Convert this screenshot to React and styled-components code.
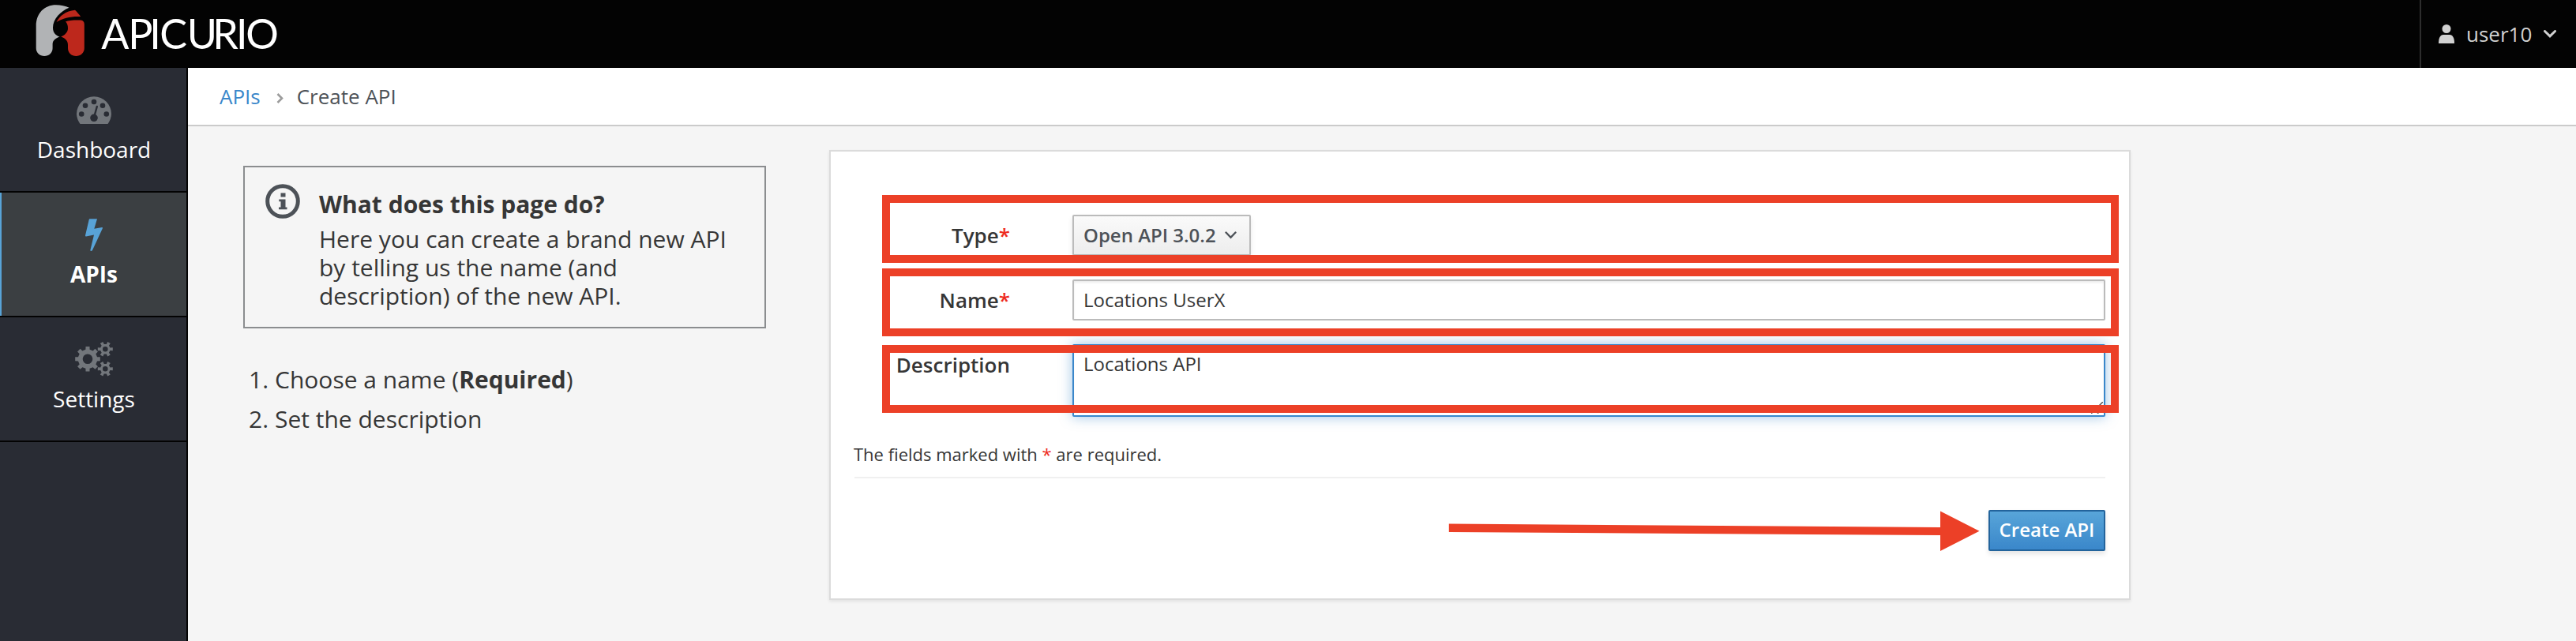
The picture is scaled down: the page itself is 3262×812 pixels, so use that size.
import React from 'react';
import styled, { createGlobalStyle, css } from 'styled-components';

const GlobalStyle = createGlobalStyle`
  *, *::before, *::after { box-sizing: border-box; }
  body {
    margin: 0;
    background: #f5f5f5;
    color: #363636;
    font-family: 'Open Sans', 'Noto Sans', sans-serif;
    overflow: hidden;
  }
`;

const Page = styled.div`
  display: flex;
  flex-direction: column;
  width: 3262px;
  height: 812px;
  overflow: hidden;
`;

const Masthead = styled.header`
  display: flex;
  justify-content: space-between;
  flex: 0 0 86px;
  background: #030303;
`;

const Logo = styled.svg`
  display: block;
  width: 360px;
  height: 86px;
`;

const LogoText = styled.text`
  font-family: Lato, sans-serif;
  font-size: 52px;
  font-weight: 400;
  fill: #fff;
`;

const UserMenu = styled.div`
  display: flex;
  align-items: center;
  width: 198px;
  padding-left: 22px;
  border-left: 2px solid #2d2d2d;
  color: #d1d1d1;
  font-size: 26px;
  line-height: 86px;
  svg { display: block; }
`;

const UserName = styled.span`
  width: 82px;
  margin: 0 16px 0 15px;
  white-space: nowrap;
`;

const Body = styled.div`
  display: flex;
  flex: 1;
  min-height: 0;
`;

const Sidebar = styled.nav`
  flex: 0 0 238px;
  background: #292c34;
  border-right: 2px solid #030303;
`;

const NavItem = styled.a`
  display: flex;
  flex-direction: column;
  align-items: center;
  gap: 8px;
  height: 158px;
  padding: 31px 0 0 2px;
  border-bottom: 2px solid #030303;
  color: #fff;
  font-size: 28px;
  line-height: 40px;
  ${({ $active }) =>
    $active &&
    css`
      background: #3b3f42;
      box-shadow: inset 2px 0 0 #58a3d7;
      font-weight: 700;
    `}
`;

const NavIcon = styled.svg`
  display: block;
  width: 48px;
  height: 44px;
  fill: ${({ $active }) => ($active ? '#58a3d7' : '#72767b')};
`;

const Main = styled.main`
  flex: 1;
  min-width: 0;
`;

const Breadcrumb = styled.div`
  display: flex;
  align-items: center;
  height: 74px;
  padding-left: 40px;
  background: #fff;
  border-bottom: 2px solid #cbcbcb;
  color: #4d5258;
  font-size: 26px;
  line-height: 72px;
  svg { display: block; margin: 4px 17px 0 20px; }
`;

const CrumbLink = styled.a`
  color: #3a87ca;
`;

const Content = styled.div`
  display: flex;
  align-items: flex-start;
  padding: 30px 0 0 70px;
`;

const Help = styled.section`
  width: 662px;
  margin: 20px 80px 0 0;
  font-size: 30px;
`;

const InfoBox = styled.div`
  display: flex;
  height: 206px;
  padding: 29px 26px 0;
  border: 2px solid #8b8d8f;
  line-height: 36px;
`;

const InfoIcon = styled.svg`
  flex: 0 0 44px;
  height: 44px;
  margin: -8px 24px 0 0;
`;

const InfoTitle = styled.div`
  margin-bottom: 8px;
  font-weight: 700;
`;

const InfoText = styled.div`
  width: 530px;
`;

const Steps = styled.ol`
  margin: 40px 0 0;
  padding: 0 0 0 7px;
  list-style: none;
  line-height: 50px;
`;

const Step = styled.li`
  display: flex;
`;

const StepNumber = styled.span`
  width: 33px;
`;

const Card = styled.div`
  position: relative;
  width: 1648px;
  height: 570px;
  padding: 80px 30px 0;
  background: #fff;
  border: 2px solid #dbdbdb;
  box-shadow: 0 2px 4px rgba(3, 3, 3, 0.08);
`;

const Row = styled.div`
  display: flex;
  align-items: flex-start;
  margin-bottom: 30px;
`;

const Label = styled.label`
  flex: 0 0 197px;
  margin-right: 79px;
  text-align: right;
  font-size: 26px;
  font-weight: 600;
  line-height: 52px;
`;

const Star = styled.span`
  color: #ee2b1d;
`;

const Dropdown = styled.div`
  display: flex;
  align-items: center;
  gap: 11px;
  width: 226px;
  height: 52px;
  padding: 0 0 1px 12px;
  border: 2px solid #bbb;
  border-radius: 2px;
  background: linear-gradient(#fafafa, #ededed);
  box-shadow: 0 4px 6px rgba(3, 3, 3, 0.1);
  color: #4d5258;
  font-size: 24px;
  font-weight: 600;
  white-space: nowrap;
`;

const Field = styled.div`
  position: relative;
  width: 1308px;
  height: ${({ $tall }) => ($tall ? '92px' : '52px')};
  padding: ${({ $tall }) => ($tall ? '0 12px' : '1px 12px 0')};
  border: 2px solid ${({ $focused }) => ($focused ? '#3a87ca' : '#bbb')};
  border-radius: 2px;
  background: #fff;
  box-shadow: ${({ $focused }) =>
    $focused
      ? 'inset 0 2px 2px rgba(3,3,3,.05), 0 0 16px rgba(58,135,202,.5)'
      : 'inset 0 2px 3px rgba(3,3,3,.08)'};
  font-size: 24px;
  line-height: 46px;
`;

const Grip = styled.svg`
  position: absolute;
  right: 1px;
  bottom: 2px;
`;

const Note = styled.p`
  margin: 32px 0 0;
  height: 46px;
  border-bottom: 2px solid #f0f0f0;
  font-size: 22px;
  line-height: 30px;
  text-indent: -1px;
`;

const Actions = styled.div`
  display: flex;
  justify-content: flex-end;
  margin-top: 40px;
`;

const PrimaryButton = styled.button`
  width: 148px;
  height: 52px;
  padding: 0 0 2px;
  border: 2px solid #23649c;
  border-radius: 2px;
  background: linear-gradient(#58a5d9, #3a87ca);
  box-shadow: 0 4px 6px rgba(3, 3, 3, 0.1);
  color: #fff;
  font: 600 24px/46px 'Open Sans', 'Noto Sans', sans-serif;
  white-space: nowrap;
`;

const Highlight = styled.div`
  position: absolute;
  left: 65px;
  top: ${({ $top }) => $top}px;
  width: 1566px;
  height: 86px;
  border: 10px solid #ec4027;
`;

const Arrow = styled.svg`
  position: absolute;
  left: 782px;
  top: 454px;
`;

function gear(cx, cy, outer, root, hole, teeth) {
  const step = (Math.PI * 2) / teeth;
  const at = (r, a) => `${(cx + r * Math.cos(a)).toFixed(2)} ${(cy + r * Math.sin(a)).toFixed(2)}`;
  const points = [];
  for (let i = 0; i < teeth; i += 1) {
    const a = i * step;
    points.push(at(root, a - step * 0.27), at(outer, a - step * 0.2), at(outer, a + step * 0.2), at(root, a + step * 0.27));
  }
  return `M${points.join('L')}ZM${cx - hole} ${cy}a${hole} ${hole} 0 1 0 ${hole * 2} 0a${hole} ${hole} 0 1 0 ${-hole * 2} 0Z`;
}

function GaugeIcon() {
  return (
    <NavIcon viewBox="95 117 48 44">
      <path d="M101.500 157Q97 150.500 97 144.300A22 22 0 0 1 141 144.300Q141 150.500 136.500 157Z" />
      <g fill="#292c34">
        <circle cx="103.200" cy="144.500" r="3.300" />
        <circle cx="108" cy="133.700" r="3.300" />
        <circle cx="119" cy="129" r="3.300" />
        <circle cx="130" cy="133.700" r="3.300" />
        <circle cx="134.800" cy="144.500" r="3.300" />
        <circle cx="119" cy="149.300" r="4.800" />
      </g>
      <path d="M119.500 147L122.800 135" stroke="#292c34" strokeWidth="2.400" strokeLinecap="round" />
    </NavIcon>
  );
}

function BoltIcon() {
  return (
    <NavIcon $active viewBox="95 275 48 44">
      <path d="M113.600 277.300H123L119.300 289.800L129.200 288Q130.300 288 129.900 289.200L117 317Q116.400 318 115 318Q114.200 317.800 114.400 316.700L119 297.400L109 299.500Q107.800 299.500 108 298.300L112.700 278.200Q112.900 277.300 113.600 277.300Z" />
    </NavIcon>
  );
}

function CogsIcon() {
  return (
    <NavIcon viewBox="95 432.500 48 44" fillRule="evenodd">
      <path d={gear(111, 454.3, 16, 12.3, 6.3, 8)} />
      <path d={gear(133.3, 441.8, 9.7, 6.4, 3.3, 6)} />
      <path d={gear(133.3, 466.7, 9.7, 6.4, 3.3, 6)} />
    </NavIcon>
  );
}

export default function App() {
  return (
    <Page>
      <GlobalStyle />
      <Masthead>
        <Logo viewBox="0 0 360 86">
          <path fill="#b1b3b5" d="M45.700 61V33C45.700 17 56 6.300 71 6.300C77 6.300 83 7.500 87.500 9.800C77 14 67 24 67 35C67 42 71 45 75.500 46.600C71 48.500 66.600 51 66.600 56V61C66.600 67 62 71 56.200 71C50.500 71 45.700 67 45.700 61Z" />
          <path fill="#bd281c" d="M71.500 28C75.500 20 83 14 95 12.700C97.500 15 100 18 102.200 21C90 20.500 80 22.500 71.500 28Z" />
          <path fill="#bd281c" d="M83 27.300C87 26 92 25.300 102.300 25.500Q106.800 26 106.800 31V61C106.800 67 102 71 96.300 71C90.500 71 86 67 86 61V57C86 51 82 48.500 77.300 46.600C83 44 86 40 86 36C86 32 85 29.500 83 27.300Z" />
          <LogoText y="61.500" x="128.300 162.300 189.300 202.300 236.800 269.300 299 311.300">APICURIO</LogoText>
        </Logo>
        <UserMenu>
          <svg width="20" height="24" viewBox="0 0 20 24" fill="#d1d1d1">
            <circle cx="10" cy="5.500" r="5.500" />
            <path d="M0 24C0 17 2 13 6 13H14C18 13 20 17 20 24Z" />
          </svg>
          <UserName>user10</UserName>
          <svg width="16" height="10" viewBox="0 0 16 10" fill="none" stroke="#d1d1d1" strokeWidth="3">
            <path d="M1.500 1.500L8 7.800L14.500 1.500" strokeLinecap="round" />
          </svg>
        </UserMenu>
      </Masthead>
      <Body>
        <Sidebar>
          <NavItem><GaugeIcon />Dashboard</NavItem>
          <NavItem $active><BoltIcon />APIs</NavItem>
          <NavItem><CogsIcon />Settings</NavItem>
        </Sidebar>
        <Main>
          <Breadcrumb>
            <CrumbLink>APIs</CrumbLink>
            <svg width="9" height="13" viewBox="0 0 9 13" fill="none" stroke="#9c9c9c" strokeWidth="2.600">
              <path d="M1.500 1L7 6.500L1.500 12" />
            </svg>
            <span>Create API</span>
          </Breadcrumb>
          <Content>
            <Help>
              <InfoBox>
                <InfoIcon viewBox="0 0 44 44">
                  <circle cx="22" cy="22" r="19.300" fill="none" stroke="#4d5258" strokeWidth="5" />
                  <path fill="#4d5258" d="M19.500 11.500H25.500V16.500H19.500ZM17.300 19.500H25.500V29.500H27.500V32.300H17V29.500H19.500V22.300H17.300Z" />
                </InfoIcon>
                <div>
                  <InfoTitle>What does this page do?</InfoTitle>
                  <InfoText>Here you can create a brand new API by telling us the name (and description) of the new API.</InfoText>
                </div>
              </InfoBox>
              <Steps>
                <Step><StepNumber>1.</StepNumber><span>Choose a name (<b>Required</b>)</span></Step>
                <Step><StepNumber>2.</StepNumber><span>Set the description</span></Step>
              </Steps>
            </Help>
            <Card>
              <Row>
                <Label>Type<Star>*</Star></Label>
                <Dropdown>
                  Open API 3.0.2
                  <svg width="15" height="10" viewBox="0 0 15 10" fill="none" stroke="#4d5258" strokeWidth="2.400">
                    <path d="M1.500 1.500L7.500 7.800L13.500 1.500" strokeLinecap="round" />
                  </svg>
                </Dropdown>
              </Row>
              <Row>
                <Label>Name<Star>*</Star></Label>
                <Field>Locations UserX</Field>
              </Row>
              <Row>
                <Label>Description</Label>
                <Field $tall $focused>
                  Locations API
                  <Grip width="15" height="15" viewBox="0 0 15 15" stroke="#555" strokeWidth="1.500">
                    <path d="M0 15L15 0M8 15L15 8" />
                  </Grip>
                </Field>
              </Row>
              <Note>The fields marked with <Star>*</Star> are required.</Note>
              <Actions>
                <PrimaryButton>Create API</PrimaryButton>
              </Actions>
              <Highlight $top={55} />
              <Highlight $top={148} />
              <Highlight $top={245} />
              <Arrow width="674" height="54" viewBox="0 0 674 54" fill="#ec4027">
                <path d="M0.800 17.500L623 22V1.500L672.500 26.800L623 52V32L0.800 28Z" />
              </Arrow>
            </Card>
          </Content>
        </Main>
      </Body>
    </Page>
  );
}
